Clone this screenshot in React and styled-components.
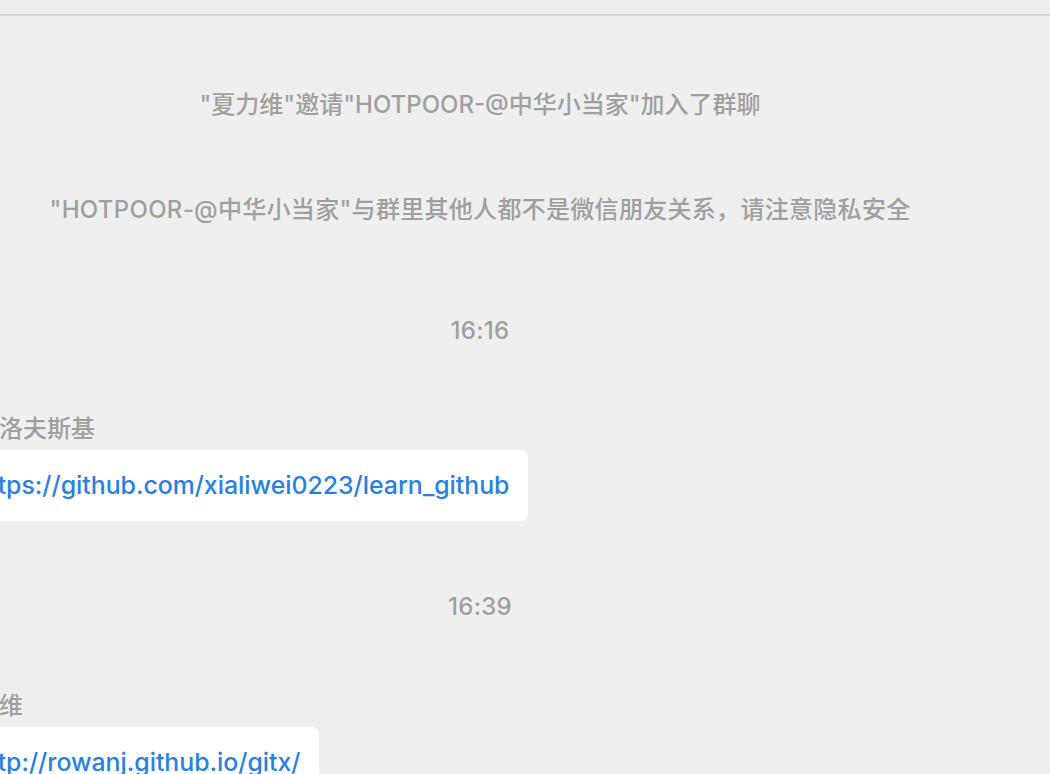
import styled, { createGlobalStyle } from 'styled-components'

const GlobalStyle = createGlobalStyle`
  html, body {
    margin: 0;
    padding: 0;
    background: #efefef;
    overflow: hidden;
  }
  body {
    font-family: Inter, 'Noto Sans CJK SC', sans-serif;
  }
`

const Window = styled.div`
  width: 1050px;
  height: 774px;
  overflow: hidden;
  background: #efefef;
  display: flex;
  flex-direction: column;
`

const TopBar = styled.div`
  height: 14px;
  flex-shrink: 0;
  border-bottom: 2px solid #d8d8d8;
`

/* the pane starts 90px left of the visible area, so its centre sits at x=480 */
const ChatPane = styled.div`
  margin-left: -90px;
  width: calc(100% + 90px);
  display: flex;
  flex-direction: column;
  padding: 0 45px;
  box-sizing: border-box;
`

const Notice = styled.div`
  margin-top: ${(p) => p.$top}px;
  text-align: center;
  font-size: 24px;
  font-weight: 500;
  line-height: 36px;
  color: #a0a0a0;
  white-space: nowrap;
  letter-spacing: ${(p) => p.$spacing || 0}px;
`

const TimeStamp = styled(Notice)`
  letter-spacing: 0.3px;
`

const Message = styled.div`
  margin-top: ${(p) => p.$top}px;
  display: flex;
  flex-direction: column;
  align-items: flex-start;
`

const Sender = styled.div`
  font-size: 24px;
  font-weight: 500;
  line-height: 36px;
  color: #a0a0a0;
  margin-left: -4px;
`

const Bubble = styled.div`
  margin-top: 3px;
  background: #ffffff;
  border-radius: 8px;
  padding: 18px 19px 18px 20px;
  font-size: 24.8px;
  font-weight: 500;
  line-height: 35px;
  white-space: nowrap;
`

const Link = styled.a`
  color: #2781e2;
  text-decoration: none;
`

export default function App() {
  return (
    <Window>
      <GlobalStyle />
      <TopBar />
      <ChatPane>
        <Notice $top={71}>"夏力维"邀请"HOTPOOR-@中华小当家"加入了群聊</Notice>
        <Notice $top={69} $spacing={0.3}>
          "HOTPOOR-@中华小当家"与群里其他人都不是微信朋友关系，请注意隐私安全
        </Notice>
        <TimeStamp $top={85}>16:16</TimeStamp>
        <Message $top={62}>
          <Sender>陀思洛夫斯基</Sender>
          <Bubble>
            <Link href="#">https://github.com/xialiwei0223/learn_github</Link>
          </Bubble>
        </Message>
        <TimeStamp $top={68}>16:39</TimeStamp>
        <Message $top={63}>
          <Sender>夏力维</Sender>
          <Bubble>
            <Link href="#">http://rowanj.github.io/gitx/</Link>
          </Bubble>
        </Message>
      </ChatPane>
    </Window>
  )
}
